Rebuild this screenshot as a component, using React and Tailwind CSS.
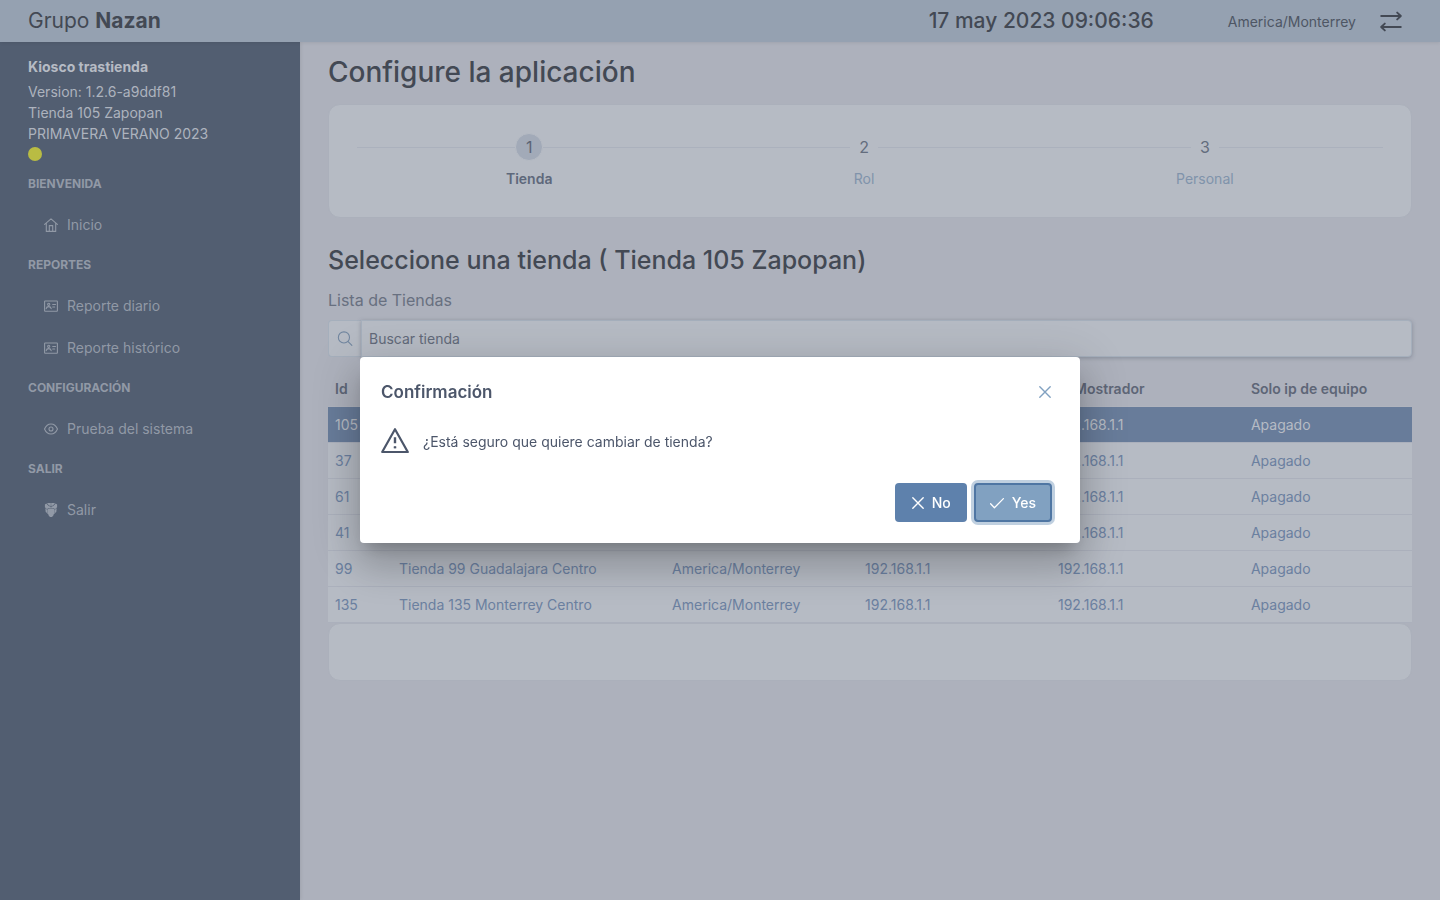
const stroke = { fill: 'none', stroke: 'currentColor', strokeLinecap: 'round', strokeLinejoin: 'round' }

function HomeIcon() {
  return (
    <svg className="size-[14px] shrink-0" viewBox="0 0 14 14" aria-hidden="true" {...stroke} strokeWidth="1.1">
      <path d="M0.6 6.3 7 .8l6.400 5.500M2.300 5.200v8.200h9.400V5.200M5.300 13.200V7.600h3.400v5.600" />
    </svg>
  )
}

function CardIcon() {
  return (
    <svg className="size-[14px] shrink-0" viewBox="0 0 14 14" aria-hidden="true" {...stroke} strokeWidth="1.1">
      <rect x="0.6" y="2" width="12.800" height="10.200" rx="0.500" />
      <circle cx="4.700" cy="5.300" r="1.100" />
      <path d="M2.200 9.600c.2-1.300 1-2 2.500-2s2.200.7 2.500 2M8.700 5.500h2.800M8.700 8h2" />
    </svg>
  )
}

function EyeIcon() {
  return (
    <svg className="size-[14px] shrink-0" viewBox="0 0 14 14" aria-hidden="true" {...stroke} strokeWidth="1.1">
      <path d="M0.500 7C2 3.600 4.300 2 7 2S12 3.600 13.500 7C12 10.400 9.700 12 7 12S2 10.400 0.500 7Z" />
      <circle cx="7" cy="7" r="2" />
    </svg>
  )
}

function PrimeIcon() {
  return (
    <svg className="size-[14px] shrink-0" viewBox="0 0 14 14" aria-hidden="true" fill="currentColor">
      <path d="M3 .1h3.800v3L4.900 2.500ZM11 .1H7.200v3L9.100 2.500ZM2.300.5 4.600 3l2.200.7v1.400H4.300L3 6.300.9 4.300V1.400ZM11.700.5 9.400 3l-2.200.7v1.400h2.500L11 6.300l2.100-2V1.400ZM1.300 5.200l1.700 1.600v3.300L1.700 8.900ZM12.700 5.200l-1.700 1.600v3.300l1.300-1.200ZM4.500 5.400h5l1.200 1.300v3.900L9.400 11.700v.9L8 13.900H6L4.600 12.600v-.9L3.300 10.600V6.700Z" />
    </svg>
  )
}

function SwapIcon() {
  return (
    <svg className="size-[22px]" viewBox="0 0 22 22" aria-hidden="true" {...stroke} strokeWidth="1.900">
      <path d="M1.200 6h19.400M17.200 2.600 20.800 6l-3.600 3.400M20.800 17H1.400M4.800 13.600 1.200 17l3.600 3.400" />
    </svg>
  )
}

function SearchIcon() {
  return (
    <svg className="size-4 pb-px" viewBox="0 0 14 14" aria-hidden="true" {...stroke}>
      <circle cx="6" cy="6" r="5.200" />
      <path d="m9.900 9.900 3.500 3.500" />
    </svg>
  )
}

function CrossIcon() {
  return (
    <svg className="size-[14px]" viewBox="0 0 14 14" aria-hidden="true" {...stroke} strokeWidth="1.400">
      <path d="m1.800 1.800 10.400 10.400M12.200 1.800 1.800 12.200" />
    </svg>
  )
}

function CheckIcon() {
  return (
    <svg className="size-[14px]" viewBox="0 0 14 14" aria-hidden="true" {...stroke} strokeWidth="1.300">
      <path d="m.6 7.800 3.800 3.900L13.400 2.600" />
    </svg>
  )
}

function WarningIcon() {
  return (
    <svg className="size-[28px] shrink-0" viewBox="0 0 28 28" aria-hidden="true" {...stroke} strokeWidth="2.200">
      <path d="M14 2.200 26.800 25H1.200Z" />
      <path d="M14 10.200v6M14 20v.6" strokeWidth="2.400" strokeLinecap="butt" />
      <path d="M14 19.200v2.200" strokeWidth="2.400" strokeLinecap="butt" />
    </svg>
  )
}

const menu = [
  { title: 'BIENVENIDA', items: [['Inicio', HomeIcon]] },
  { title: 'REPORTES', items: [['Reporte diario', CardIcon], ['Reporte histórico', CardIcon]] },
  { title: 'CONFIGURACIÓN', items: [['Prueba del sistema', EyeIcon]] },
  { title: 'SALIR', items: [['Salir', PrimeIcon]] },
]

const steps = [
  { label: 'Tienda', flex: 'flex-[345_1_0%]' },
  { label: 'Rol', flex: 'flex-[326_1_0%]' },
  { label: 'Personal', flex: 'flex-[357_1_0%]' },
]

const stores = [
  ['105', 'Tienda 105 Zapopan'],
  ['37', 'Tienda 37 Guadalajara'],
  ['61', 'Tienda 61 Guadalajara'],
  ['41', 'Tienda 41 Guadalajara'],
  ['99', 'Tienda 99 Guadalajara Centro'],
  ['135', 'Tienda 135 Monterrey Centro'],
]

function Header() {
  return (
    <header className="relative z-10 flex h-[42px] items-center bg-[#95a1b1] pr-[38px] pl-7 text-[#434954] shadow-[0_0_4px_rgba(0,0,0,0.12)]">
      <div className="text-[21px] leading-6">
        Grupo <strong className="font-bold">Nazan</strong>
      </div>
      <time className="ml-auto text-[21px] leading-6 font-medium">17 may 2023 09:06:36</time>
      <span className="ml-[74px] pt-px text-sm text-[#4e5664]">America/Monterrey</span>
      <button type="button" aria-label="Cambiar zona horaria" className="ml-6">
        <SwapIcon />
      </button>
    </header>
  )
}

function Sidebar() {
  return (
    <aside className="w-[300px] shrink-0 bg-[#525e71] px-7 pt-[14px] text-sm text-[#adb3be] shadow-[0_0_4px_rgba(0,0,0,0.12)]">
      <div className="pb-[3px] leading-[22px] font-bold text-[#b6bbc4]">Kiosco trastienda</div>
      <div className="leading-[21px]">
        <div>Version: 1.2.6-a9ddf81</div>
        <div>Tienda 105 Zapopan</div>
        <div>PRIMAVERA VERANO 2023</div>
      </div>
      <div className="mt-[3px] size-[14px] rounded-full bg-[#b9bc43]" />
      <nav className="mt-[14px] text-[#9199a6]">
        {menu.map((group) => (
          <section key={group.title}>
            <h2 className="mb-3 text-xs leading-[17px] font-bold">{group.title}</h2>
            <ul className="pb-[10px]">
              {group.items.map(([label, Icon]) => (
                <li key={label}>
                  <a href="#" className="flex h-[42px] items-center gap-[9px] px-4">
                    <Icon />
                    {label}
                  </a>
                </li>
              ))}
            </ul>
          </section>
        ))}
      </nav>
    </aside>
  )
}

function Steps() {
  return (
    <div className="rounded-xl border border-[#abb0bb] bg-[#b6bbc4] p-7">
      <ol className="flex">
        {steps.map(({ label, flex }, i) => (
          <li key={label} className={`flex flex-col items-center ${flex}`}>
            <div className="flex w-full items-center">
              <span className="h-px flex-1 bg-[#abb1bd]" />
              <span className={`flex size-[28px] items-center justify-center rounded-full border border-[#b6bbc4] text-base ${i === 0 ? 'bg-[#a2aab8] text-[#5b6475]' : 'text-[#636c7d]'}`}>
                {i + 1}
              </span>
              <span className="h-px flex-1 bg-[#abb1bd]" />
            </div>
            <span className={`mt-[7px] h-[21px] text-sm leading-[21px] ${i === 0 ? 'font-semibold text-[#5e687b]' : 'text-[#8093ab]'}`}>{label}</span>
          </li>
        ))}
      </ol>
    </div>
  )
}

function StoreTable() {
  return (
    <table className="w-full table-fixed text-left text-sm">
      <colgroup>
        <col className="w-[5.900%]" />
        <col className="w-[25.200%]" />
        <col className="w-[17.800%]" />
        <col className="w-[17.800%]" />
        <col className="w-[17.800%]" />
        <col />
      </colgroup>
      <thead>
        <tr className="h-9 border-b border-[#b0b4be] text-[#5e6677]">
          {['Id', 'Nombre', 'Zona horaria', 'Ip Servidor', 'Ip Mostrador', 'Solo ip de equipo'].map((h) => (
            <th key={h} className="px-[7px] pt-[2px] font-semibold">{h}</th>
          ))}
        </tr>
      </thead>
      <tbody>
        {stores.map(([id, name], i) => (
          <tr key={id} className={`h-9 border-b border-[#abb0bc] ${i === 0 ? 'bg-[#687c9a] text-[#b6bbc4]' : 'bg-[#b6bbc4] text-[#6b80a0]'}`}>
            {[id, name, 'America/Monterrey', '192.168.1.1', '192.168.1.1', 'Apagado'].map((value, col) => (
              <td key={col} className="px-[7px] pt-[2px]">{value}</td>
            ))}
          </tr>
        ))}
      </tbody>
    </table>
  )
}

function ConfirmDialog() {
  return (
    <div className="fixed inset-0 z-20 flex items-center justify-center">
      <div
        role="dialog"
        aria-modal="true"
        aria-labelledby="confirm-title"
        className="w-1/2 rounded bg-white text-[#4c566a] shadow-[0_11px_15px_-7px_rgba(0,0,0,0.2),0_24px_38px_3px_rgba(0,0,0,0.14),0_9px_46px_8px_rgba(0,0,0,0.12)]"
      >
        <div className="flex items-center justify-between p-[21px]">
          <h2 id="confirm-title" className="text-[17px] leading-7 font-semibold">Confirmación</h2>
          <button type="button" aria-label="Cerrar" className="flex size-7 items-center justify-center text-[#81a1c1]">
            <CrossIcon />
          </button>
        </div>
        <div className="flex items-center gap-[14px] px-[21px] pb-7">
          <WarningIcon />
          <p className="pt-[2px] text-sm">¿Está seguro que quiere cambiar de tienda?</p>
        </div>
        <div className="flex justify-end gap-[7px] pr-7 pb-[21px] text-sm font-medium text-white">
          <button type="button" className="flex h-[39px] items-center gap-[7px] rounded bg-[#5e81ac] px-4">
            <CrossIcon />
            No
          </button>
          <button type="button" className="flex h-[39px] items-center gap-2 rounded border-2 border-[#4f76a3] bg-[#81a1c1] px-[14px] shadow-[0_0_0_3px_#c0d0e0]">
            <CheckIcon />
            Yes
          </button>
        </div>
      </div>
    </div>
  )
}

export default function App() {
  return (
    <div className="flex min-h-screen flex-col bg-[#adb1bc] font-['Inter',sans-serif]">
      <Header />
      <div className="flex flex-1">
        <Sidebar />
        <main className="min-w-0 flex-1 px-7 pt-[13px] text-[#434954]">
          <h1 className="text-[28px] leading-[34px] font-medium">Configure la aplicación</h1>
          <div className="mt-[15px]">
            <Steps />
          </div>
          <h2 className="mt-[27px] text-[25px] leading-[30px] font-medium">Seleccione una tienda ( Tienda 105 Zapopan)</h2>
          <label htmlFor="store-search" className="mt-[13px] block text-base leading-6 text-[#687080]">
            Lista de Tiendas
          </label>
          <div className="mt-2 flex h-[37px] rounded">
            <span className="flex w-[33px] items-center justify-center rounded-l border border-r-0 border-[#a5afbc] bg-[#b6bbc4] text-[#71869f]">
              <SearchIcon />
            </span>
            <input
              id="store-search"
              type="text"
              placeholder="Buscar tienda"
              className="min-w-0 flex-1 rounded-r border border-[#a5afbc] bg-[#b6bbc4] px-[7px] text-sm shadow-[0_1px_4px_rgba(60,70,90,0.35)] outline-none placeholder:text-[#626a7a]"
            />
          </div>
          <div className="mt-[13px]">
            <StoreTable />
          </div>
          <div className="h-[58px] rounded-xl border border-[#abb0bb] bg-[#b6bbc4]" />
        </main>
      </div>
      <ConfirmDialog />
    </div>
  )
}
